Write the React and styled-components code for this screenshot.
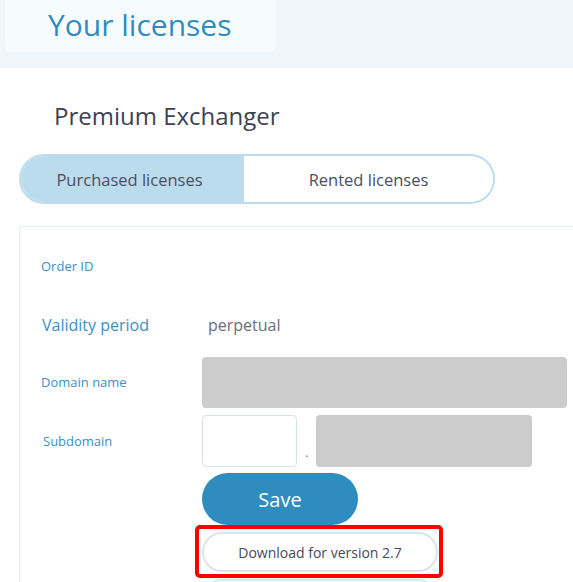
import React from 'react'
import styled, { createGlobalStyle } from 'styled-components'

const GlobalStyle = createGlobalStyle`
  body {
    margin: 0;
    background: #fff;
    font-family: "Open Sans", "Noto Sans", sans-serif;
    overflow: hidden;
  }
`;

const Page = styled.div`
  width: 573px;
  height: 582px;
  overflow: hidden;
`;

const Header = styled.div`
  height: 68px;
  background: #eff7fb;
  padding-left: 5px;
`;

const TitleBox = styled.div`
  width: 271px;
  height: 52px;
  background: #f6fbfd;
  border-radius: 0 0 6px 6px;
  padding-left: 43px;
  box-sizing: border-box;
`;

const Title = styled.h1`
  margin: 0;
  font-size: 30px;
  font-weight: 400;
  line-height: 50px;
  color: #2f8cc1;
  text-shadow: 0 0 4px #fff, 0 0 4px #fff;
`;

const Content = styled.div`
  padding: 32px 0 0 19px;
`;

const Subtitle = styled.h2`
  margin: 0 0 22px 35px;
  font-size: 24px;
  font-weight: 400;
  line-height: 32px;
  color: #3d4253;
`;

const Tabs = styled.div`
  display: flex;
  width: 476px;
  height: 50px;
  border-radius: 25px;
  border: 2px solid #badcec;
  box-sizing: border-box;
  overflow: hidden;
`;

const Tab = styled.button`
  flex: ${p => (p.$active ? '0 0 223px' : '1')};
  border: 0;
  margin: 0;
  padding: 0 ${p => (p.$active ? 6 : 0)}px 0 0;
  background: ${p => (p.$active ? '#badcec' : '#fff')};
  color: #4b4e62;
  font-family: inherit;
  font-size: 16.5px;
  cursor: pointer;
`;

const Card = styled.div`
  margin-top: 22px;
  border: 1px solid #e4edf2;
  border-right: 0;
  border-radius: 4px 0 0 0;
  padding: 28px 0 20px 21px;
  height: 400px;
`;

const Row = styled.div`
  display: grid;
  grid-template-columns: 161px 1fr;
  align-items: center;
  min-height: ${p => p.$h || 52}px;
  margin-bottom: ${p => p.$mb || 7}px;
`;

const Label = styled.div`
  font-size: ${p => (p.$big ? 16 : 13)}px;
  color: #3a8fc4;
  padding-left: ${p => p.$indent || 0}px;
`;

const Value = styled.div`
  font-size: 16px;
  color: #6c6d80;
  padding-left: 6px;
`;

const Fields = styled.div`
  display: flex;
  align-items: center;
  gap: 8px;
`;

const GreyField = styled.div`
  width: ${p => p.$w}px;
  height: ${p => p.$h || 51}px;
  background: #cccccc;
  border-radius: 4px;
`;

const TextInput = styled.input`
  width: 95px;
  height: 52px;
  box-sizing: border-box;
  border: 1px solid #d4e4ed;
  border-radius: 4px;
  padding: 0 8px;
  font-family: inherit;
`;

const Dot = styled.span`
  align-self: flex-end;
  margin-bottom: 6px;
  font-size: 13px;
  color: #3a8fc4;
`;

const Actions = styled.div`
  margin-left: 161px;
  display: flex;
  flex-direction: column;
  align-items: flex-start;
`;

const SaveButton = styled.button`
  width: 156px;
  height: 52px;
  border: 0;
  border-radius: 26px;
  background: #2e8cbf;
  color: #fff;
  font-family: inherit;
  font-size: 20px;
  cursor: pointer;
`;

const Highlight = styled.div`
  margin-left: -7px;
  padding: 3px 1px 2px 3px;
  border: 4px solid #ff0000;
  border-radius: 5px;
  background: #fff;
`;

const OutlineButton = styled.button`
  display: block;
  width: 236px;
  height: 40px;
  border: 2px solid #d8e6ee;
  border-radius: 20px;
  background: #fff;
  color: #46485c;
  font-family: inherit;
  font-size: 14px;
  cursor: pointer;
  margin-top: ${p => p.$mt || 0}px;
`;

export default function App() {
  return (
    <Page>
      <GlobalStyle />
      <Header>
        <TitleBox>
          <Title>Your licenses</Title>
        </TitleBox>
      </Header>
      <Content>
        <Subtitle>Premium Exchanger</Subtitle>
        <Tabs>
          <Tab $active>Purchased licenses</Tab>
          <Tab>Rented licenses</Tab>
        </Tabs>
        <Card>
          <Row $h={22} $mb={37}>
            <Label>Order ID</Label>
          </Row>
          <Row $h={22} $mb={20}>
            <Label $big $indent={1}>Validity period</Label>
            <Value>perpetual</Value>
          </Row>
          <Row $mb={7}>
            <Label>Domain name</Label>
            <GreyField $w={365} />
          </Row>
          <Row $mb={6}>
            <Label $indent={2}>Subdomain</Label>
            <Fields>
              <TextInput />
              <Dot>.</Dot>
              <GreyField $w={216} $h={52} />
            </Fields>
          </Row>
          <Actions>
            <SaveButton>Save</SaveButton>
            <Highlight>
              <OutlineButton>Download for version 2.7</OutlineButton>
            </Highlight>
            <OutlineButton $mt={1} />
          </Actions>
        </Card>
      </Content>
    </Page>
  )
}
